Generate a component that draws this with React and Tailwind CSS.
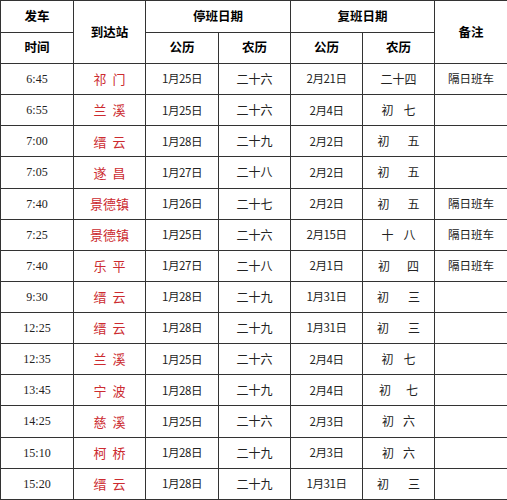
import React from "react";

const rows = [
  ["6:45", "祁门", "1月25日", "二十六", "2月21日", ["二十四"], "隔日班车"],
  ["6:55", "兰溪", "1月25日", "二十六", "2月4日", ["初", "七", 10], ""],
  ["7:00", "缙云", "1月28日", "二十九", "2月2日", ["初", "五", 18], ""],
  ["7:05", "遂昌", "1月27日", "二十八", "2月2日", ["初", "五", 18], ""],
  ["7:40", "景德镇", "1月26日", "二十七", "2月2日", ["初", "五", 18], "隔日班车"],
  ["7:25", "景德镇", "1月25日", "二十六", "2月15日", ["十", "八", 10], "隔日班车"],
  ["7:40", "乐平", "1月27日", "二十八", "2月1日", ["初", "四", 17], "隔日班车"],
  ["9:30", "缙云", "1月28日", "二十九", "1月31日", ["初", "三", 19], ""],
  ["12:25", "缙云", "1月28日", "二十九", "1月31日", ["初", "三", 19], ""],
  ["12:35", "兰溪", "1月25日", "二十六", "2月4日", ["初", "七", 10], ""],
  ["13:45", "宁波", "1月28日", "二十九", "2月4日", ["初", "七", 15], ""],
  ["14:25", "慈溪", "1月25日", "二十六", "2月3日", ["初", "六", 9], ""],
  ["15:10", "柯桥", "1月28日", "二十九", "2月3日", ["初", "六", 9], ""],
  ["15:20", "缙云", "1月28日", "二十九", "1月31日", ["初", "三", 19], ""],
];

const cjk = { fontFamily: '"Noto Sans CJK SC", sans-serif' };
const serif = { fontFamily: '"Liberation Serif", "Noto Sans CJK SC", serif' };

function Pair({ a, b, gap }) {
  return (
    <span className="inline-flex items-center">
      <span>{a}</span>
      <span className="inline-block" style={{ width: gap }} />
      <span>{b}</span>
    </span>
  );
}

function Lunar({ v }) {
  if (v.length === 1) return <span>{v[0]}</span>;
  return <Pair a={v[0]} b={v[1]} gap={v[2]} />;
}

function Station({ name }) {
  if (name.length === 3) return <span>{name}</span>;
  return <Pair a={name[0]} b={name[1]} gap={6} />;
}

export default function App() {
  const th = "border border-[#333] font-bold text-[12.5px] text-black text-center p-0";
  const td = "border border-[#333] text-center p-0 whitespace-pre";
  return (
    <div className="w-[507px] h-[500px] bg-white overflow-hidden">
      <table className="border-collapse table-fixed w-[507px]" style={cjk}>
        <colgroup>
          <col className="w-[73px]" />
          <col className="w-[72px]" />
          <col className="w-[73px]" />
          <col className="w-[72px]" />
          <col className="w-[72px]" />
          <col className="w-[72px]" />
          <col className="w-[73px]" />
        </colgroup>
        <thead>
          <tr className="h-[31.5px]">
            <th className={th}>发车</th>
            <th className={th} rowSpan={2}>到达站</th>
            <th className={th} colSpan={2}>停班日期</th>
            <th className={th} colSpan={2}>复班日期</th>
            <th className={th} rowSpan={2}>备注</th>
          </tr>
          <tr className="h-[31.5px]">
            <th className={th}>时间</th>
            <th className={th}>公历</th>
            <th className={th}>农历</th>
            <th className={th}>公历</th>
            <th className={th}>农历</th>
          </tr>
        </thead>
        <tbody>
          {rows.map((r, i) => (
            <tr key={i} className="h-[31.14px]">
              <td className={td + " text-[12px] text-[#222]"} style={serif}>{r[0]}</td>
              <td className={td + " text-[13px] text-[#cc2b30]"}>
                <Station name={r[1]} />
              </td>
              <td className={td + " text-[11.5px] text-[#222] tracking-[-0.4px]"}>{r[2]}</td>
              <td className={td + " text-[12px] text-[#222]"}>{r[3]}</td>
              <td className={td + " text-[11.5px] text-[#222] tracking-[-0.4px]"}>{r[4]}</td>
              <td className={td + " text-[12px] text-[#222]"}>
                <Lunar v={r[5]} />
              </td>
              <td className={td + " text-[11.5px] text-[#222]"}>{r[6]}</td>
            </tr>
          ))}
        </tbody>
      </table>
    </div>
  );
}
